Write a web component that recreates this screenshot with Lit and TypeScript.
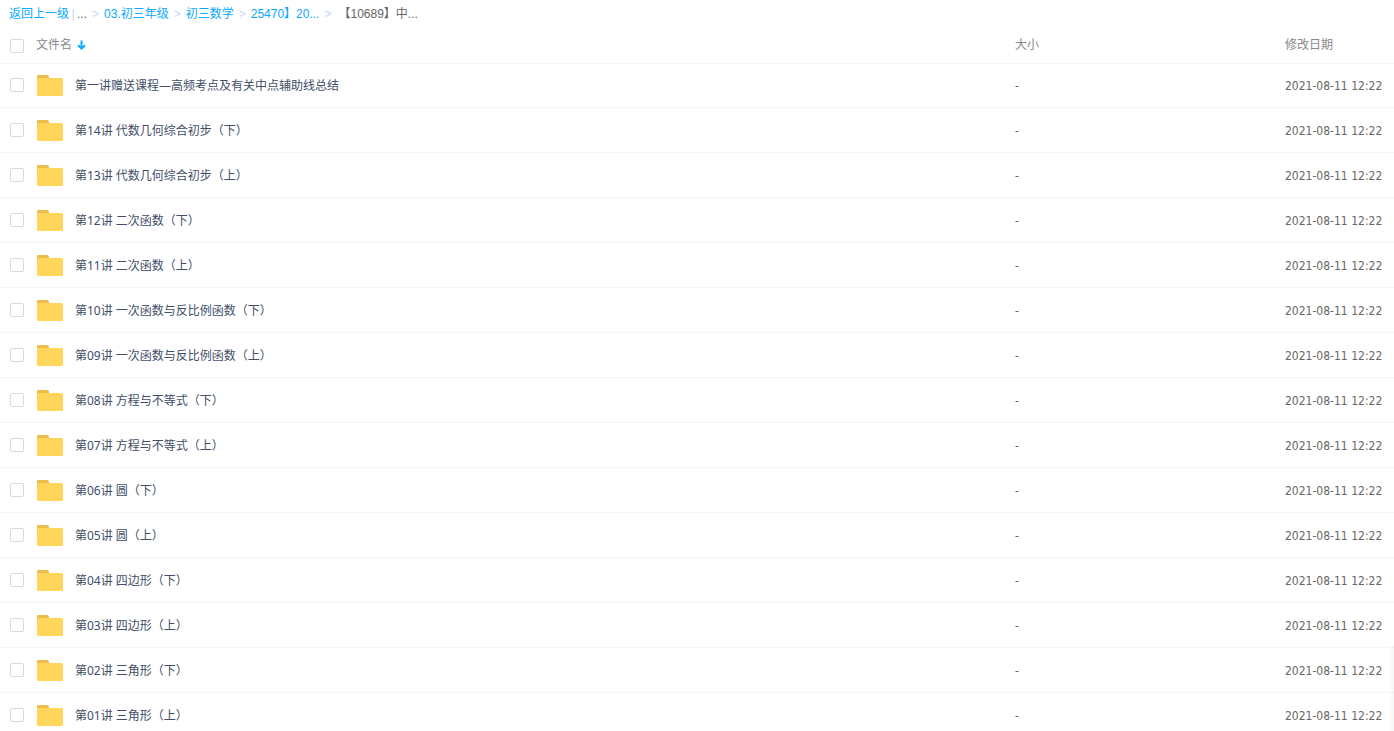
import { LitElement, html, css } from "lit";
import { customElement, state } from "lit/decorators.js";

interface Entry {
  name: string;
  size: string;
  date: string;
}

const NAMES = [
  "第一讲赠送课程—高频考点及有关中点辅助线总结",
  "第14讲 代数几何综合初步（下）",
  "第13讲 代数几何综合初步（上）",
  "第12讲 二次函数（下）",
  "第11讲 二次函数（上）",
  "第10讲 一次函数与反比例函数（下）",
  "第09讲 一次函数与反比例函数（上）",
  "第08讲 方程与不等式（下）",
  "第07讲 方程与不等式（上）",
  "第06讲 圆（下）",
  "第05讲 圆（上）",
  "第04讲 四边形（下）",
  "第03讲 四边形（上）",
  "第02讲 三角形（下）",
  "第01讲 三角形（上）",
];

const ENTRIES: Entry[] = NAMES.map((name) => ({
  name,
  size: "-",
  date: "2021-08-11 12:22",
}));

const TRAIL = ["03.初三年级", "初三数学", "25470】20..."];

@customElement("app-root")
export class AppRoot extends LitElement {
  static styles = css`
    :host {
      display: block;
      position: relative;
      height: 100vh;
      overflow: hidden;
      background: #fff;
      color: #424e67;
      font: 12px/18px "Noto Sans", "Noto Sans CJK SC", sans-serif;
    }
    .trail {
      display: flex;
      height: 28px;
      align-items: center;
      padding-left: 9px;
      color: #666;
      font-family: "Liberation Sans", "Noto Sans CJK SC", sans-serif;
      white-space: nowrap;
    }
    .trail a {
      color: #09aaff;
      text-decoration: none;
    }
    .bar {
      width: 8px;
      color: #c4d8f4;
      text-align: center;
    }
    .sep {
      width: 17px;
      color: #c4d8f4;
      text-align: center;
    }
    .current {
      padding-left: 2px;
    }
    .list {
      width: 100%;
      table-layout: fixed;
      border-collapse: separate;
      border-spacing: 0;
    }
    .size {
      width: 270px;
    }
    .date {
      width: 109px;
    }
    th,
    td {
      box-sizing: border-box;
      padding: 0;
      text-align: left;
      vertical-align: middle;
      font-weight: 400;
      white-space: nowrap;
    }
    th {
      height: 35px;
      color: #888;
      box-shadow: 0 1px 0 #f2f6fd;
    }
    th.size,
    th.date {
      padding-bottom: 2px;
    }
    td {
      height: 45px;
      color: #666;
      border-bottom: 1px solid #f2f6fd;
    }
    .value {
      padding-top: 2px;
    }
    .time {
      font-family: "DejaVu Sans Condensed", "Noto Sans", sans-serif;
    }
    .cell {
      display: flex;
      align-items: center;
      padding-left: 10px;
      color: #424e67;
    }
    .head {
      color: #888;
    }
    .name {
      padding-top: 2px;
    }
    .box {
      appearance: none;
      flex: none;
      box-sizing: border-box;
      width: 14px;
      height: 14px;
      margin: 0 12px 0 0;
      border: 1px solid #d5dae5;
      border-radius: 2px;
      background: #fff;
    }
    .box:checked {
      border-color: #09aaff;
      background: #09aaff;
    }
    .folder {
      flex: none;
      width: 28px;
      height: 22px;
      margin-right: 11px;
    }
    .sort {
      display: flex;
      align-items: center;
      gap: 5px;
      padding: 0 0 2px;
      border: 0;
      background: none;
      color: inherit;
      font: inherit;
    }
    .panel-edge {
      position: absolute;
      right: 0;
      bottom: 0;
      width: 4px;
      height: 86px;
      background: linear-gradient(to right, #00000004, #00000008);
    }
  `;

  @state() private picked = new Set<number>();

  private toggle(index: number) {
    const next = new Set(this.picked);
    next.has(index) ? next.delete(index) : next.add(index);
    this.picked = next;
  }

  private toggleAll() {
    this.picked =
      this.picked.size === ENTRIES.length
        ? new Set()
        : new Set(ENTRIES.keys());
  }

  private row(entry: Entry, index: number) {
    return html`<tr>
      <td>
        <label class="cell">
          <input
            class="box"
            type="checkbox"
            .checked=${this.picked.has(index)}
            @change=${() => this.toggle(index)}
          />
          <svg class="folder" viewBox="0 0 28 22" aria-hidden="true">
            <path fill="#edbd4b" d="M1 6V2q0-1 1-1h9.500q.6 0 1 .6L13 3v3z" />
            <rect x="1" y="4" width="26" height="18" rx="1.500" fill="#ffd659" />
          </svg>
          <span class="name">${entry.name}</span>
        </label>
      </td>
      <td class="value">${entry.size}</td>
      <td class="value time">${entry.date}</td>
    </tr>`;
  }

  render() {
    return html`
      <nav class="trail">
        <a href="#">返回上一级</a><span class="bar">|</span><span>...</span>
        ${TRAIL.map(
          (part) => html`<span class="sep">&gt;</span><a href="#">${part}</a>`
        )}
        <span class="sep">&gt;</span
        ><span class="current">【10689】中...</span>
      </nav>
      <table class="list">
        <thead>
          <tr>
            <th>
              <div class="cell head">
                <input
                  class="box"
                  type="checkbox"
                  aria-label="全选"
                  .checked=${this.picked.size === ENTRIES.length}
                  @change=${this.toggleAll}
                />
                <button class="sort">
                  文件名
                  <svg width="9" height="10" viewBox="0 0 9 10" aria-hidden="true">
                    <path
                      d="M4.500 0.500V8M1 5.200L4.500 8.600L8 5.200"
                      fill="none"
                      stroke="#09aaff"
                      stroke-width="2"
                    />
                  </svg>
                </button>
              </div>
            </th>
            <th class="size">大小</th>
            <th class="date">修改日期</th>
          </tr>
        </thead>
        <tbody>
          ${ENTRIES.map((entry, index) => this.row(entry, index))}
        </tbody>
      </table>
      <div class="panel-edge"></div>
    `;
  }
}
